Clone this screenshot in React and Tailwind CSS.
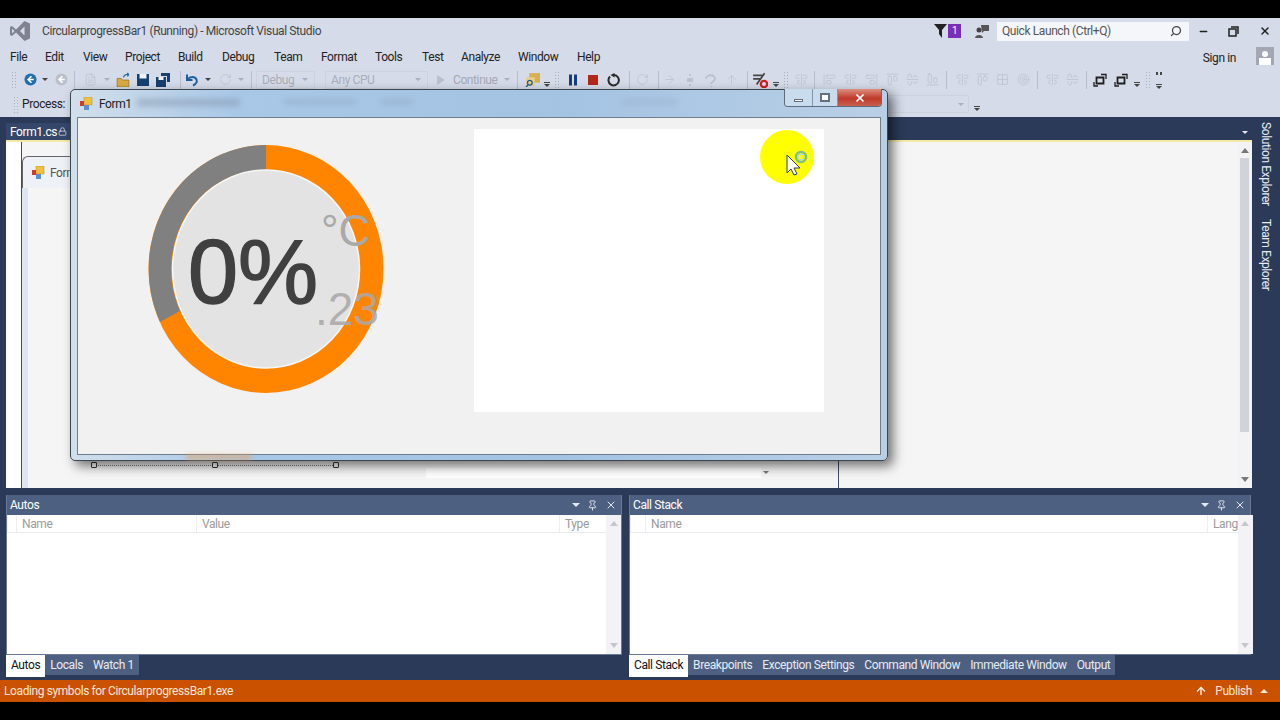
import React from 'react';
import {
  AlignStartVertical, AlignCenterVertical, AlignEndVertical,
  AlignStartHorizontal, AlignCenterHorizontal, AlignEndHorizontal,
  ArrowRight, ArrowUp, RotateCw, Search, X, Minus, Pin, FileText, Lock, Grid2x2, Target,
} from 'lucide-react';

const menus = [
  ['File', 'w-[35px]'], ['Edit', 'w-[38px]'], ['View', 'w-[42px]'], ['Project', 'w-[53px]'], ['Build', 'w-[44px]'],
  ['Debug', 'w-[52px]'], ['Team', 'w-[47px]'], ['Format', 'w-[54px]'], ['Tools', 'w-[47px]'], ['Test', 'w-[39px]'],
  ['Analyze', 'w-[57px]'], ['Window', 'w-[59px]'], ['Help', 'w-[40px]'],
];

const Caret = ({ className = 'border-t-[#444]' }) => (
  <span className={`w-0 h-0 border-x-[3px] border-x-transparent border-t-[3px] ${className}`} />
);

const DropSlot = ({ gray, w = 'w-[13px]' }) => (
  <span className={`${w} flex justify-center shrink-0`}>
    <Caret className={gray ? 'border-t-[#a9aeba]' : 'border-t-[#444]'} />
  </span>
);

const OverflowSlot = ({ w = 'w-[12px]' }) => (
  <span className={`${w} h-[14px] flex flex-col items-center justify-end gap-[1px] shrink-0`}>
    <span className="w-[6px] h-[1px] bg-[#444]" />
    <Caret />
  </span>
);

const Grip = () => (
  <span className="w-[6px] h-[17px] mx-[2px] shrink-0 bg-[radial-gradient(#a9afc0_1px,transparent_1px)] bg-[length:3px_3px]" />
);

const Sep = () => <span className="w-[1px] h-[18px] bg-[#b8bece] mx-[3px] shrink-0" />;

const Gap = ({ w }) => <span className={`${w} shrink-0`} />;

const Slot = ({ icon: Icon, w = 'w-[20px]', color = '#bcc1ce', size = 13 }) => (
  <span className={`${w} flex justify-center shrink-0`}>
    <Icon size={size} color={color} strokeWidth={1.4} className="shrink-0" />
  </span>
);

const Svg = ({ w = 'w-[20px]', size = 14, children }) => (
  <span className={`${w} flex justify-center shrink-0`}>
    <svg width={size} height={size} viewBox="0 0 14 14" className="shrink-0">{children}</svg>
  </span>
);

const Combo = ({ label, w }) => (
  <span className={`${w} h-[18px] border border-[#cdd2df] flex items-center justify-between pl-[5px] pr-[6px] text-[#a9aeba] text-[12px] shrink-0`}>
    {label}
    <Caret className="border-t-[#a9aeba]" />
  </span>
);

const BackIcon = ({ color }) => (
  <Svg size={13}>
    <circle cx="7" cy="7" r="6.500" fill={color} />
    <path d="M8 3.500 4.500 7 8 10.500M5 7h5.500" stroke="#fff" strokeWidth="1.800" fill="none" />
  </Svg>
);

const FolderIcon = () => (
  <Svg size={15}>
    <path d="M1 6h4l1 1.500h6V14H1z" fill="#d9a944" stroke="#8a6a1f" strokeWidth=".6" />
    <path d="M7 5c.5-2 2.500-3.500 5-2.500M12 2.500 10.500 1M12 2.500 10.400 4" stroke="#1e6a9e" strokeWidth="1.200" fill="none" />
  </Svg>
);

const SaveIcon = ({ double }) => (
  <Svg>
    {double && <path d="M5 0h9v9h-3V3H5z" fill="#16406e" />}
    <path d={double ? 'M0 4h10v10H0z' : 'M1 1h12v12H1z'} fill="#16406e" />
    <path d={double ? 'M2.500 4h5v3h-5z' : 'M3.500 1h7v4.500h-7z'} fill="#eef1f7" />
  </Svg>
);

const UndoIcon = ({ w }) => (
  <Svg w={w}>
    <path d="M2 1.500v5.500h5.500" fill="none" stroke="#1e5f9e" strokeWidth="2" />
    <path d="M2.500 6.500C5 3 10 3 11.500 6.500 12.500 9 10.500 11.500 8 12.500" fill="none" stroke="#1e5f9e" strokeWidth="2" />
  </Svg>
);

const FindIcon = () => (
  <Svg size={15}>
    <path d="M4 1h10v9H4z" fill="#d9b04e" />
    <path d="M1 5h8v8H1z" fill="#e9cf8b" />
    <circle cx="4.500" cy="10" r="2.200" fill="none" stroke="#1e5f96" strokeWidth="1.200" />
    <path d="M3 12 1 14" stroke="#1e5f96" strokeWidth="1.300" />
  </Svg>
);

const SizeIcon = ({ w }) => (
  <Svg w={w}>
    <path d="M3.500 4.500h7v6h-7z" fill="none" stroke="#1f1f1f" strokeWidth="1.800" />
    <path d="M8 1.500h5V6M1 9v4h4" fill="none" stroke="#1f1f1f" strokeWidth="1.300" />
  </Svg>
);

const Toolbar = () => (
  <div className="h-[23px] flex items-center pl-[9px] shrink-0">
    <Grip />
    <Gap w="w-[1px]" />
    <BackIcon color="#1e6fb0" />
    <DropSlot w="w-[10px]" />
    <Gap w="w-[1px]" />
    <BackIcon color="#bcc0cb" />
    <Sep />
    <Gap w="w-[2px]" />
    <Slot icon={FileText} />
    <DropSlot gray />
    <FolderIcon />
    <SaveIcon />
    <SaveIcon double />
    <Gap w="w-[4px]" />
    <Sep />
    <UndoIcon w="w-[16px]" />
    <DropSlot w="w-[16px]" />
    <Slot icon={RotateCw} w="w-[18px]" />
    <DropSlot gray w="w-[14px]" />
    <Sep />
    <Gap w="w-[1px]" />
    <Combo label="Debug" w="w-[59px]" />
    <Gap w="w-[10px]" />
    <Combo label="Any CPU" w="w-[103px]" />
    <Gap w="w-[9px]" />
    <svg width="8" height="10" viewBox="0 0 8 10" className="shrink-0"><path d="M0 0l8 5-8 5z" fill="#bcc0cb" /></svg>
    <span className="ml-[8px] text-[12px] text-[#a2a7b4] w-[49px] shrink-0">Continue</span>
    <DropSlot gray w="w-[10px]" />
    <Gap w="w-[2px]" />
    <Sep />
    <Gap w="w-[1px]" />
    <FindIcon />
    <OverflowSlot w="w-[10px]" />
    <Grip />
    <Gap w="w-[1px]" />
    <Svg><path d="M3 1.500h3v11H3zM8 1.500h3v11H8z" fill="#123f78" /></Svg>
    <Svg><path d="M2 2h10v10H2z" fill="#b3271b" /></Svg>
    <Gap w="w-[1px]" />
    <Svg>
      <path d="M3 3.500A5.200 5.200 0 1 0 7 2" fill="none" stroke="#2a2a2a" strokeWidth="2" />
      <path d="M7.500 0v4.500L3.500 2z" fill="#2a2a2a" />
    </Svg>
    <Gap w="w-[2px]" />
    <Sep />
    <Slot icon={RotateCw} w="w-[19px]" />
    <Gap w="w-[3px]" />
    <Sep />
    <Slot icon={ArrowRight} w="w-[14px]" />
    <Svg w="w-[28px]"><path d="M7 1v2M7 11v2M5 6h4v2H5z" fill="none" stroke="#bcc1ce" strokeWidth="1.800" /></Svg>
    <Svg w="w-[14px]"><path d="M2 6c0-5 9-5 9 0 0 2-4 3-4 5M7 13v1" fill="none" stroke="#bcc1ce" strokeWidth="1.800" /></Svg>
    <Slot icon={ArrowUp} w="w-[26px]" />
    <Sep />
    <Svg w="w-[18px]" size={16}>
      <path d="M1 3h8M1 6h6M4 11 11 1" stroke="#444" strokeWidth="1.500" />
      <circle cx="10.500" cy="10.500" r="2.800" fill="none" stroke="#d31d1d" strokeWidth="2" />
    </Svg>
    <Gap w="w-[2px]" />
    <OverflowSlot w="w-[10px]" />
    <Grip />
    <Gap w="w-[1px]" />
    <Slot icon={AlignCenterVertical} w="w-[18px]" />
    <Gap w="w-[1px]" />
    <Sep />
    <Gap w="w-[1px]" />
    <Slot icon={AlignStartVertical} />
    <Gap w="w-[1px]" />
    <Slot icon={AlignCenterVertical} />
    <Gap w="w-[1px]" />
    <Slot icon={AlignEndVertical} />
    <Gap w="w-[1px]" />
    <Slot icon={AlignStartHorizontal} />
    <Slot icon={AlignCenterHorizontal} />
    <Slot icon={AlignEndHorizontal} />
    <Gap w="w-[1px]" />
    <Sep />
    <Gap w="w-[2px]" />
    <Slot icon={AlignCenterVertical} />
    <Slot icon={AlignStartHorizontal} />
    <Slot icon={Grid2x2} />
    <Gap w="w-[1px]" />
    <Slot icon={Target} />
    <Gap w="w-[1px]" />
    <Sep />
    <Gap w="w-[1px]" />
    <Slot icon={AlignCenterVertical} />
    <Slot icon={AlignCenterHorizontal} />
    <Gap w="w-[1px]" />
    <Sep />
    <SizeIcon />
    <Gap w="w-[1px]" />
    <SizeIcon />
    <OverflowSlot />
    <Grip />
    <span className="w-[12px] h-[16px] flex flex-col items-center justify-between shrink-0">
      <span className="flex gap-[2px]"><span className="w-[2px] h-[3px] bg-[#444]" /><span className="w-[2px] h-[3px] bg-[#444]" /></span>
      <OverflowSlot w="w-[12px]" />
    </span>
  </div>
);

const Gauge = () => (
  <svg width="250" height="260" viewBox="0 0 250 260" className="shrink-0 tracking-normal">
    <ellipse cx="125" cy="130" rx="117.500" ry="124" fill="#ff8500" />
    <path d="M125 6A117.500 124 0 0 0 19 183L39 172A93.500 99 0 0 1 125 31Z" fill="#808080" />
    <ellipse cx="125" cy="130" rx="93.500" ry="99" fill="#e3e3e3" stroke="#f7f7f7" strokeWidth="1.500" />
    <text x="47" y="164" fontFamily="'Liberation Sans', sans-serif" fontSize="90" fill="#404040" stroke="#404040" strokeWidth="1.500">0%</text>
    <text x="180" y="107" fontFamily="'Liberation Sans', sans-serif" fontSize="44" fill="#a9a9a9">°C</text>
    <text x="174" y="186" fontFamily="'Liberation Sans', sans-serif" fontSize="46" fill="#a9a9a9" fillOpacity=".9">.23</text>
  </svg>
);

const FormIcon = () => (
  <svg width="13" height="13" viewBox="0 0 13 13" className="shrink-0">
    <path d="M4 0h8v8H4z" fill="#eec23f" stroke="#b08a2a" strokeWidth=".5" />
    <path d="M0 4h4v5H0z" fill="#d0392b" />
    <path d="M4 8h5v5H4z" fill="#5b8fd0" />
  </svg>
);

// the running app window that floats over the IDE
const RunningForm = () => (
  <div className="absolute left-[70px] top-[89px] w-[818px] h-[372px] rounded-[5px] border border-[#3c4650] bg-[linear-gradient(90deg,#d2dfeb,#a9c8e8_20%,#a4c3e3_60%,#b9cfe6)] shadow-[5px_5px_12px_rgba(0,0,0,0.55)] flex flex-col px-[6px] pb-[5px]">
    <div className="h-[27px] flex items-center pl-[3px] gap-[6px] shrink-0 relative">
      <FormIcon />
      <span className="text-[12px] text-[#222] relative">Form1</span>
      <div className="absolute left-[60px] top-[9px] w-[103px] h-[7px] bg-[#7d8da3] opacity-50 blur-[3px]" />
      <div className="absolute left-[206px] top-[9px] w-[74px] h-[6px] bg-[#8a9db8] opacity-40 blur-[3px]" />
      <div className="absolute left-[303px] top-[9px] w-[33px] h-[6px] bg-[#8a9db8] opacity-40 blur-[3px]" />
      <div className="absolute left-[545px] top-[9px] w-[55px] h-[6px] bg-[#8a9db8] opacity-30 blur-[3px]" />
      <div className="absolute right-[-1px] top-[-1px] h-[18px] flex rounded-b-[4px] border border-t-0 border-[#5d6b7d] overflow-hidden">
        <span className="w-[27px] bg-[#c9dcee] flex items-end justify-center pb-[4px]">
          <span className="w-[9px] h-[3px] bg-white border border-[#66707c]" />
        </span>
        <span className="w-[25px] bg-[#c9dcee] border-l border-[#8395a8] flex items-center justify-center">
          <span className="w-[10px] h-[9px] border-2 border-[#66707c] bg-white" />
        </span>
        <span className="w-[44px] bg-[linear-gradient(180deg,#dc8f80,#c0392b_55%,#c9604e)] border-l border-[#8395a8] flex items-center justify-center">
          <X size={12} color="#fff" strokeWidth={3.500} />
        </span>
      </div>
    </div>
    <div className="flex-1 bg-[#f1f1f1] border border-[#6f7e8f] flex relative">
      <div className="pl-[63px] pt-[21px]">
        <Gauge />
      </div>
      <div className="absolute left-[396px] top-[11px] w-[350px] h-[283px] bg-white" />
    </div>
    <div className="absolute left-[115px] bottom-[1px] w-[66px] h-[4px] bg-[#e8a25a] opacity-70 blur-[2px]" />
  </div>
);

// yellow highlight the screen recorder puts round the pointer
const CursorHighlight = () => (
  <div className="absolute left-[760px] top-[130px] w-[54px] h-[54px] rounded-full bg-[#ffff00]">
    <svg width="54" height="54" viewBox="0 0 54 54">
      <circle cx="41" cy="27" r="5" fill="none" stroke="#7fc08a" strokeWidth="2.500" />
      <circle cx="41" cy="27" r="3" fill="none" stroke="#a9d6e8" strokeWidth="1" />
      <path d="M27 25v18l4-4 3 6 3-1-3-6h6z" fill="#fff" stroke="#30404a" strokeWidth="1" />
    </svg>
  </div>
);

const Handle = () => <span className="w-[6px] h-[6px] border border-[#333] bg-white rounded-[1px]" />;

const DocumentArea = () => (
  <div className="h-[371px] flex flex-col shrink-0">
    <div className="h-[23px] flex items-end justify-between pr-[2px] shrink-0">
      <div className="w-[64px] h-[17px] bg-[#34466a] text-white text-[12px] leading-[16px] pl-[4px] flex justify-between items-center pr-[3px]">
        Form1.cs
        <Lock size={9} color="#d6dbe9" strokeWidth={2} />
      </div>
      <span className="pb-[6px] pr-[2px] flex"><Caret className="border-t-[#e5e9f2]" /></span>
    </div>
    <div className="flex-1 bg-[#f5f5f5] border-t-2 border-[#f6e9a8] flex">
      <div className="w-[15px] bg-white shrink-0" />
      <div className="w-[818px] border-x border-[#3f4d66] pt-[14px] flex flex-col shrink-0">
        <div className="h-[32px] w-[200px] bg-[#eef1f5] rounded-tl-[6px] flex items-center pl-[9px] gap-[5px] border-t border-l border-[#666]">
          <FormIcon />
          <span className="text-[12px] text-[#555]">Form1</span>
        </div>
        <div className="flex-1 border-l-[6px] border-[#dbe6f2] relative">
          <div className="absolute left-[63px] top-[277px] w-[248px] flex justify-between items-center border-b border-dotted border-[#777] h-[1px]">
            <Handle /><Handle /><Handle />
          </div>
          <div className="absolute left-[398px] top-[280px] w-[335px] h-[10px] bg-white" />
          <div className="absolute left-[735px] top-[284px]"><Caret className="border-t-[#777]" /></div>
        </div>
      </div>
      <div className="flex-1" />
      <div className="w-[15px] shrink-0 bg-[#f3f3f5] flex flex-col items-center justify-between py-[6px] relative">
        <span className="w-0 h-0 border-x-[4px] border-x-transparent border-b-[5px] border-b-[#777]" />
        <span className="absolute top-[16px] left-[3px] w-[9px] h-[274px] bg-[#d0d3da]" />
        <Caret className="border-t-[#777] border-x-[4px] border-t-[5px]" />
      </div>
    </div>
  </div>
);

const Panel = ({ title, columns, tabs, width }) => (
  <div className={`${width} flex flex-col shrink-0`}>
    <div className="h-[160px] flex flex-col bg-white border border-[#6a7a96] border-t-0">
      <div className="h-[20px] bg-[#4d6082] flex items-center justify-between pl-[3px] pr-[4px] shrink-0">
        <span className="text-[12px] text-white">{title}</span>
        <span className="flex items-center gap-[7px]">
          <Caret className="border-t-[#e5e9f2] border-x-[4px] border-t-[4px]" />
          <Pin size={11} color="#e5e9f2" />
          <X size={12} color="#e5e9f2" />
        </span>
      </div>
      <div className="flex-1 flex min-h-0">
        <div className="flex-1 h-[18px] flex border-b border-[#e8eaef] text-[12px] text-[#9b9b9b]">
          {columns.map(([label, w]) => (
            <span key={label} className={`${w} pl-[5px] border-l border-[#eceef2] leading-[19px] overflow-hidden`}>{label}</span>
          ))}
        </div>
        <div className="w-[15px] bg-[#f3f3f5] flex flex-col items-center justify-between py-[6px] shrink-0">
          <span className="w-0 h-0 border-x-[4px] border-x-transparent border-b-[5px] border-b-[#c4c7ce]" />
          <Caret className="border-t-[#c4c7ce] border-x-[4px] border-t-[5px]" />
        </div>
      </div>
    </div>
    <div className="flex text-[12px] leading-[20px] h-[22px]">
      {tabs.map((t, i) => (
        <span key={t} className={i === 0 ? 'h-[22px] bg-white text-[#111] px-[5px]' : 'h-[20px] bg-[#4d6082] text-[#e8ecf4] px-[5px]'}>{t}</span>
      ))}
    </div>
  </div>
);

export default function App() {
  return (
    <div className="w-[1280px] h-[720px] bg-black py-[18px] relative overflow-hidden font-['Roboto',sans-serif] tracking-[-0.4px]">
      <div className="h-[684px] bg-[#d6dbe9] flex flex-col">
        <div className="h-[26px] flex items-center pl-[10px] shrink-0 relative">
          <svg width="20" height="20" viewBox="0 0 20 20" className="shrink-0">
            <path d="M14.500 0 20 2.500v15L14.500 20 6 11.500 2 15 0 14V6l2-1 4 3.500zM14.500 5.500 10 10l4.500 4.500zM2 7.500v5L4.500 10z" fill="#80838f" fillRule="evenodd" />
          </svg>
          <span className="ml-[12px] text-[12px] text-[#444]">CircularprogressBar1 (Running) - Microsoft Visual Studio</span>
          <div className="ml-auto flex items-center">
            <svg width="13" height="14" viewBox="0 0 13 14" className="shrink-0"><path d="M0 0h13L8 6v8L5 10V6z" fill="#222" /></svg>
            <span className="w-[13px] h-[14px] ml-[1px] bg-[#7a2fb8] text-white text-[10px] leading-[14px] text-center">1</span>
            <span className="w-[14px]" />
            <svg width="14" height="14" viewBox="0 0 14 14" className="shrink-0">
              <circle cx="4" cy="6" r="2.500" fill="#444" />
              <path d="M0 14c0-4 8-4 8 0zM6 1h8v6H9L7 9z" fill="#555" />
            </svg>
            <span className="w-[8px]" />
            <div className="w-[192px] h-[19px] bg-[#f5f6fa] flex items-center justify-between pl-[5px] pr-[7px] text-[12px] text-[#555]">
              Quick Launch (Ctrl+Q)
              <Search size={12} color="#444" strokeWidth={2.500} className="-scale-x-100" />
            </div>
            <span className="w-[8px]" />
            <span className="w-[12px] flex justify-center"><Minus size={11} color="#222" strokeWidth={3} /></span>
            <span className="w-[19px]" />
            <svg width="11" height="11" viewBox="0 0 11 11" className="shrink-0">
              <path d="M3 1h7v7M1 3h7v7H1z" fill="none" stroke="#222" strokeWidth="1.500" />
            </svg>
            <span className="w-[20px]" />
            <X size={12} color="#222" strokeWidth={3} />
            <span className="w-[9px]" />
          </div>
        </div>
        <div className="h-[24px] flex items-center pl-[10px] pr-[6px] shrink-0">
          {menus.map(([m, w]) => (
            <span key={m} className={`${w} text-[12px] text-[#222] pt-[1px]`}>{m}</span>
          ))}
          <span className="ml-auto text-[12px] text-[#222] pt-[3px]">Sign in</span>
          <span className="w-[20px]" />
          <span className="w-[18px] h-[18px] bg-[#a3a7b3] flex flex-col items-center justify-end overflow-hidden">
            <span className="w-[6px] h-[6px] rounded-full bg-white" />
            <span className="w-[12px] h-[7px] mt-[1px] bg-white" />
          </span>
        </div>
        <Toolbar />
        <div className="h-[26px] flex items-center pl-[11px] shrink-0">
          <Grip />
          <span className="ml-[1px] text-[12px] text-[#222]">Process:</span>
          <div className="ml-auto mr-[297px] flex items-center gap-[2px]">
            <span className="w-[80px] h-[18px] border-y border-r border-[#cdd2df] flex items-center justify-end pr-[4px]"><Caret className="border-t-[#a9aeba]" /></span>
            <OverflowSlot />
          </div>
        </div>
        <div className="flex-1 bg-[#2b3a58] flex min-h-0">
          <div className="w-[1252px] pl-[6px] flex flex-col shrink-0">
            <DocumentArea />
            <div className="h-[7px] shrink-0" />
            <div className="flex gap-[7px]">
              <Panel
                title="Autos"
                width="w-[616px]"
                columns={[['', 'w-[9px]'], ['Name', 'w-[180px]'], ['Value', 'w-[363px]'], ['Type', 'flex-1']]}
                tabs={['Autos', 'Locals', 'Watch 1']}
              />
              <Panel
                title="Call Stack"
                width="w-[622px]"
                columns={[['', 'w-[15px]'], ['Name', 'w-[562px]'], ['Lang', 'flex-1']]}
                tabs={['Call Stack', 'Breakpoints', 'Exception Settings', 'Command Window', 'Immediate Window', 'Output']}
              />
            </div>
          </div>
          <div className="flex-1 flex flex-col items-center pt-[5px] gap-[13px] text-[12px] text-[#e8ecf4]">
            <span className="[writing-mode:vertical-rl]">Solution Explorer</span>
            <span className="[writing-mode:vertical-rl]">Team Explorer</span>
          </div>
        </div>
        <div className="h-[22px] bg-[#ca5100] flex items-center justify-between pl-[4px] pr-[12px] text-[12px] text-[#f5e6d8] shrink-0">
          <span>Loading symbols for CircularprogressBar1.exe</span>
          <span className="flex items-center gap-[8px]">
            <ArrowUp size={12} color="#f5e6d8" strokeWidth={3} />
            Publish
            <span className="w-0 h-0 border-x-[4px] border-x-transparent border-b-[4px] border-b-[#f5e6d8]" />
          </span>
        </div>
      </div>
      <RunningForm />
      <CursorHighlight />
    </div>
  );
}
